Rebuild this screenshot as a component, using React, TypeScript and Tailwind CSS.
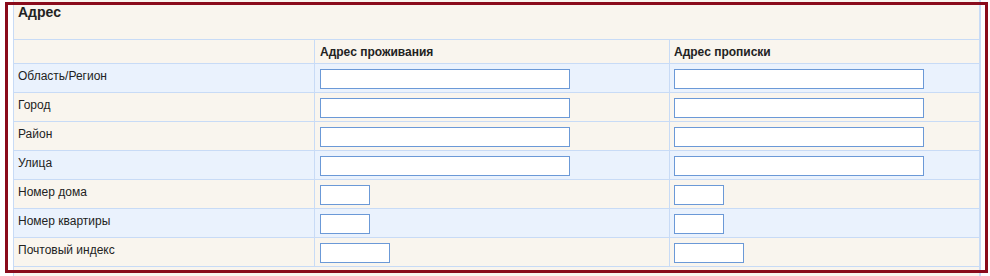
const rows = [
  { label: "Область/Регион", size: "w-[250px]", bg: "bg-[#eaf2fd]" },
  { label: "Город", size: "w-[250px]", bg: "bg-[#f9f5ee]" },
  { label: "Район", size: "w-[250px]", bg: "bg-[#f9f5ee]" },
  { label: "Улица", size: "w-[250px]", bg: "bg-[#eaf2fd]" },
  { label: "Номер дома", size: "w-[50px]", bg: "bg-[#f9f5ee]" },
  { label: "Номер квартиры", size: "w-[50px]", bg: "bg-[#eaf2fd]" },
  { label: "Почтовый индекс", size: "w-[70px]", bg: "bg-[#f9f5ee]" },
];

const Field = ({ size }: { size: string }) => (
  <input
    type="text"
    className={`block ${size} h-[20px] bg-white border border-[#6b99d7] outline-none`}
  />
);

export default function App() {
  return (
    <div className="relative w-[990px] h-[276px] overflow-hidden bg-white font-['Liberation_Sans',Arial,sans-serif] text-[#222]">
      {/* table */}
      <div className="ml-[13px] w-[968px] bg-[#c8dbf6] border-l border-r-2 border-[#c8dbf6] flex flex-col gap-px">
        {/* title row */}
        <div className="h-[39px] bg-[#f9f5ee] pl-[4px] pt-[4px] text-[14px] leading-[16px] font-bold">
          Адрес
        </div>

        {/* column headers */}
        <div className="grid grid-cols-[300px_354px_309px] gap-px h-[23px]">
          <div className="bg-[#f9f5ee]" />
          <div className="bg-[#f9f5ee] pl-[5px] flex items-center text-[12px] leading-[14px] font-bold">
            Адрес проживания
          </div>
          <div className="bg-[#f9f5ee] pl-[4px] flex items-center text-[12px] leading-[14px] font-bold">
            Адрес прописки
          </div>
        </div>

        {rows.map((r) => (
          <div key={r.label} className="grid grid-cols-[300px_354px_309px] gap-px h-[28px]">
            <div className={`${r.bg} pl-[4px] pt-[5px] text-[12px] leading-[14px]`}>{r.label}</div>
            <div className={`${r.bg} pl-[5px] pt-[5px]`}>
              <Field size={r.size} />
            </div>
            <div className={`${r.bg} pl-[4px] pt-[5px]`}>
              <Field size={r.size} />
            </div>
          </div>
        ))}

        <div className="h-[20px] bg-[#f9f5ee]" />
      </div>

      {/* red highlight frame */}
      <div className="absolute left-[5px] top-[2px] w-[983px] h-[271px] border-[3px] border-[#8a0b1b] pointer-events-none" />
    </div>
  );
}
